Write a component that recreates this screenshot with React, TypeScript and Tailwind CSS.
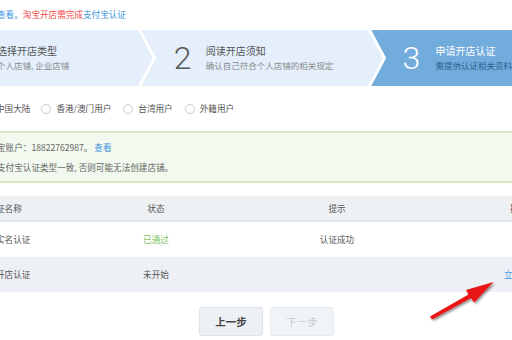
import React from "react";

const cjk = "font-['Noto_Sans_CJK_SC','Noto_Sans',sans-serif]";

function Radio() {
  return <span className="inline-block w-[10px] h-[10px] rounded-full border border-[#c9ccd1] bg-white" />;
}

export default function App() {
  return (
    <div className={`relative w-[512px] h-[340px] overflow-hidden bg-white ${cjk}`}>
      {/* top notice */}
      <div className="h-[30px] pb-[2px] flex items-center text-[8.6px] leading-none ml-[-3px] whitespace-nowrap">
        <span className="text-[#3d95e0]">查看。</span>
        <span className="text-[#ef4a4a]">淘宝开店需完成</span>
        <span className="text-[#3d95e0]">支付宝认证</span>
      </div>

      {/* steps banner */}
      <div className="relative h-[56px] bg-[#e4effb] flex">
        <div className="w-[140px] flex items-center pb-[1px]">
          <div className="ml-[-3px] flex flex-col whitespace-nowrap">
            <span className="text-[10px] leading-[14px] text-[#555]">选择开店类型</span>
            <span className="text-[8.5px] leading-[14px] text-[#8a8a8a]">个人店铺, 企业店铺</span>
          </div>
        </div>
        <div className="w-[230px] flex items-center pb-[1px]">
          <span className="ml-[34px] w-[32px] font-['Roboto',sans-serif] font-light text-[32px] leading-none text-[#5a5a5a]">2</span>
          <div className="flex flex-col whitespace-nowrap">
            <span className="text-[10px] leading-[14px] text-[#555]">阅读开店须知</span>
            <span className="text-[8.5px] leading-[14px] text-[#8a8a8a]">确认自己符合个人店铺的相关规定</span>
          </div>
        </div>
        <div className="flex-1 bg-[#72acdd] flex items-center pb-[1px] [clip-path:polygon(0_0,100%_0,100%_100%,0_100%,16px_50%)]">
          <span className="ml-[33px] w-[33px] font-['Roboto',sans-serif] font-light text-[32px] leading-none text-white">3</span>
          <div className="flex flex-col whitespace-nowrap">
            <span className="text-[10px] leading-[14px] text-white">申请开店认证</span>
            <span className="text-[8.5px] leading-[14px] text-[#2d5f8e]">需提供认证相关资料</span>
          </div>
        </div>
        <svg className="absolute left-0 top-0 pointer-events-none" width="512" height="56" viewBox="0 0 512 56">
          <polyline points="139,-1 154.5,28 139,57" fill="none" stroke="#ffffff" strokeWidth="3" />
          <polyline points="369,-1 384.5,28 369,57" fill="none" stroke="#ffffff" strokeWidth="3" />
        </svg>
      </div>

      {/* radio row */}
      <div className="h-[45px] flex items-center text-[8.6px] leading-none text-[#555] whitespace-nowrap ml-[-4px]">
        <span>中国大陆</span>
        <span className="ml-[11px] flex items-center gap-[5px]"><Radio /><span>香港/澳门用户</span></span>
        <span className="ml-[12px] flex items-center gap-[5px]"><Radio /><span>台湾用户</span></span>
        <span className="ml-[12px] flex items-center gap-[5px]"><Radio /><span>外籍用户</span></span>
      </div>

      {/* green notice */}
      <div className="h-[52px] border-y-2 border-[#d3e8c3] bg-[#f2f9ee] pt-[8px] text-[8.6px] leading-[12px] text-[#666] whitespace-nowrap">
        <div className="ml-[-3px]">宝账户：18822762987。 <span className="text-[#3d95e0]">查看</span></div>
        <div className="mt-[8px] ml-[-3px]">支付宝认证类型一致, 否则可能无法创建店铺。</div>
      </div>

      {/* table */}
      <div className="mt-[13px] text-[8.6px] leading-none text-[#555] whitespace-nowrap">
        <div className="h-[26px] bg-[#eef1f4] border-b-2 border-[#e3e6ea] grid grid-cols-[121px_70px_292px_29px] items-center">
          <span className="ml-[-4px]">证名称</span>
          <span className="text-center">状态</span>
          <span className="text-center">提示</span>
          <span className="pl-[27px]">操作</span>
        </div>
        <div className="h-[35px] bg-white grid grid-cols-[121px_70px_292px_29px] items-center">
          <span className="ml-[-4px]">实名认证</span>
          <span className="text-center text-[#7cc25a]">已通过</span>
          <span className="text-center">认证成功</span>
          <span />
        </div>
        <div className="h-[35px] bg-[#edf0f4] grid grid-cols-[121px_70px_292px_29px] items-center">
          <span className="ml-[-4px]">开店认证</span>
          <span className="text-center">未开始</span>
          <span />
          <span className="pl-[21px] text-[#3d95e0]">立即认证</span>
        </div>
      </div>

      {/* buttons */}
      <div className="mt-[15px] pl-[199px] flex gap-[7px]">
        <button className="w-[64px] h-[29px] rounded-[3px] border border-[#dde2e8] bg-[#edf1f5] text-[10.5px] font-semibold text-[#444]">上一步</button>
        <button className="w-[64px] h-[29px] rounded-[3px] border border-[#e6eaee] bg-[#f1f4f7] text-[10.5px] text-[#c8ccd0]">下一步</button>
      </div>

      {/* red annotation arrow */}
      <svg className="absolute left-0 top-0 pointer-events-none" width="512" height="340" viewBox="0 0 512 340">
        <defs>
          <filter id="sh" x="-20%" y="-20%" width="140%" height="140%">
            <feDropShadow dx="1.5" dy="1.5" stdDeviation="1.2" floodColor="#000" floodOpacity="0.45" />
          </filter>
        </defs>
        <g filter="url(#sh)">
          <polygon points="430,316.5 468.5,294.5 466,290 493.5,282 474,302.5 471,298 432,319.5" fill="#ea1414" />
        </g>
      </svg>
    </div>
  );
}
